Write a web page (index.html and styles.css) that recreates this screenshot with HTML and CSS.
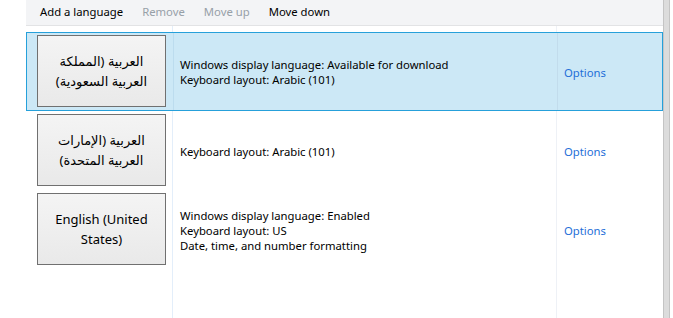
FILE: index.html
```html
<!DOCTYPE html>
<html lang="en">
  <head>
    <meta charset="UTF-8" />
    <title>Language</title>
    <link rel="stylesheet" href="styles.css">
  </head>

  <body>
    <div class="pane">
      <div class="toolbar">
        <span class="tool">Add a language</span>
        <span class="tool disabled">Remove</span>
        <span class="tool disabled">Move up</span>
        <span class="tool">Move down</span>
      </div>

      <div class="list">
        <div class="row selected">
          <div class="lang-cell">
            <button class="lang-btn"><span dir="rtl">العربية (المملكة العربية السعودية)</span></button>
          </div>
          <div class="info">
            <div>Windows display language: Available for download</div>
            <div>Keyboard layout: Arabic (101)</div>
          </div>
          <div class="options"><a href="#">Options</a></div>
        </div>

        <div class="row">
          <div class="lang-cell">
            <button class="lang-btn"><span dir="rtl">العربية (الإمارات العربية المتحدة)</span></button>
          </div>
          <div class="info">
            <div>Keyboard layout: Arabic (101)</div>
          </div>
          <div class="options"><a href="#">Options</a></div>
        </div>

        <div class="row">
          <div class="lang-cell">
            <button class="lang-btn">English (United States)</button>
          </div>
          <div class="info">
            <div>Windows display language: Enabled</div>
            <div>Keyboard layout: US</div>
            <div>Date, time, and number formatting</div>
          </div>
          <div class="options"><a href="#">Options</a></div>
        </div>
      </div>
    </div>

    <div class="scrollbar"></div>
  </body>
</html>
```

FILE: styles.css
```css
body {
  margin: 0;
  font-family: 'Noto Sans', 'DejaVu Sans', sans-serif;
  background-color: #fff;
  color: #000;
  display: flex;
  height: 318px;
  overflow: hidden;
}

.pane {
  width: 637px;
  padding-left: 26px;
  display: flex;
  flex-direction: column;
}

.toolbar {
  height: 26px;
  background-color: #f3f4f6;
  border-bottom: 1px solid #e2e3e5;
  display: flex;
  align-items: center;
  padding-left: 14px;
  gap: 19px;
  font-size: 11.3px;
  padding-bottom: 2px;
  box-sizing: border-box;
}

.tool.disabled {
  color: #97a0a8;
}

.list {
  flex-grow: 1;
  padding-top: 6px;
  background-image:
    linear-gradient(#e3eefa, #e3eefa),
    linear-gradient(#eef1f6, #eef1f6);
  background-size: 1px 100%, 1px 100%;
  background-position: 146px 0, 530px 0;
  background-repeat: no-repeat;
}

.row {
  height: 79px;
  box-sizing: border-box;
  border: 1px solid transparent;
  display: flex;
  font-size: 11.3px;
  width: 637px;
}

.row.selected {
  background-color: #cce8f6;
  border-color: #26a0da;
}

.lang-cell {
  width: 146px;
  flex-shrink: 0;
  box-sizing: border-box;
  padding: 2px 0 0 10px;
}

.lang-btn {
  width: 129px;
  height: 72px;
  border: 1px solid #707070;
  background: linear-gradient(#f4f4f4, #e9e9e9);
  font-family: 'Noto Sans', 'DejaVu Sans', sans-serif;
  font-size: 13px;
  line-height: 20px;
  color: #000;
  padding: 0 12px;
}

.info {
  width: 384px;
  flex-shrink: 0;
  box-sizing: border-box;
  padding: 1px 0 0 6px;
  display: flex;
  flex-direction: column;
  justify-content: center;
  line-height: 15px;
  border-left: 1px solid transparent;
}

.row.selected .info {
  border-left-color: #bcdcee;
}

.options {
  flex-grow: 1;
  display: flex;
  align-items: center;
  padding: 1px 0 0 6px;
  border-left: 1px solid transparent;
}

.row.selected .options {
  border-left-color: #c2dcec;
}

.options a {
  color: #1f6fd8;
  text-decoration: none;
}

.scrollbar {
  width: 5px;
  height: 318px;
  background-color: #dcdcdc;
  border-left: 1px solid #c4c4c4;
  border-right: 1px solid #c4c4c4;
}
```
